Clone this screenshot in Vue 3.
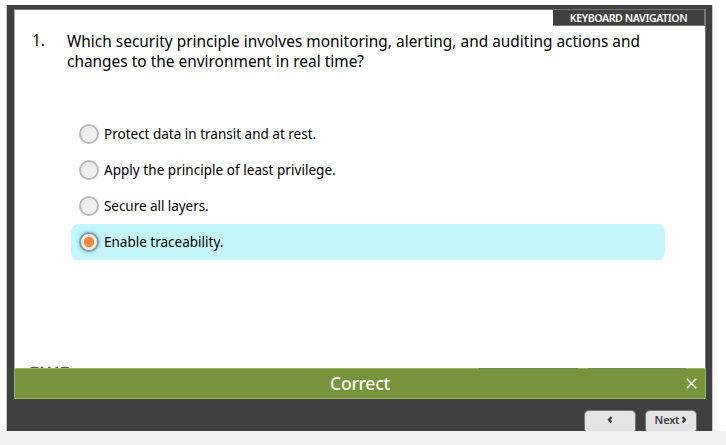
<script setup>
import { ref } from 'vue'

const selected = ref(3)
const options = [
  { text: 'Protect data in transit and at rest.', key: 'a' },
  { text: 'Apply the principle of least privilege.', key: 'b' },
  { text: 'Secure all layers.', key: 'c' },
  { text: 'Enable traceability.', key: 'd' },
]
</script>

<template>
  <div class="page">
    <main class="player">
      <section class="slide">
        <button class="keyboard">KEYBOARD NAVIGATION</button>
        <div class="question">
          <span class="number">1.</span>
          <p class="prompt">
            <span class="line first">Which security principle involves monitoring, alerting, and auditing actions and</span>
            <span class="line second">changes to the environment in real time?</span>
          </p>
        </div>
        <div class="options">
          <div
            v-for="(o, i) in options"
            :key="o.key"
            class="option"
            :class="[o.key, { selected: selected === i }]"
            @click="selected = i"
          >
            <span class="radio"></span>
            <span class="label">{{ o.text }}</span>
          </div>
        </div>
        <svg class="logo" width="42" height="2" viewBox="0 0 42 2">
          <g fill="none" stroke="#4f5865" stroke-width="1.3">
            <path d="M1.5 1.9Q5.5 .8 9.5 1.9" />
            <path d="M11.7 1.4h2.5M19 1.4h2.5M26.5 1.4h2.5" />
            <path d="M32 1.9Q36 .8 40 1.9" />
          </g>
        </svg>
      </section>
      <div class="feedback">
        <i class="edge one"></i><i class="edge two"></i>
        <span class="verdict">Correct</span>
        <svg class="close" width="11" height="11" viewBox="0 0 11 11">
          <path d="M.8.8l9.4 9.4M10.2.8L.8 10.2" stroke="#fff" stroke-width="1.5" fill="none" />
        </svg>
      </div>
      <nav class="controls">
        <button class="nav">
          <svg width="6" height="8" viewBox="0 0 6 8"><path d="M4.5 1L2 3.8l2.500 2.800" /></svg>
        </button>
        <button class="nav next">
          <span class="next-text">Next</span>
          <svg width="6" height="8" viewBox="0 0 6 8"><path d="M1.5 1L4 3.8 1.500 6.600" /></svg>
        </button>
      </nav>
    </main>
  </div>
</template>

<style>
body {
  margin: 0;
  background: #fff;
  overflow: hidden;
}
</style>

<style scoped>
.page {
  box-sizing: border-box;
  height: 445px;
  padding: 5px 13px 0 6px;
  background: linear-gradient(#fff 431px, #f0f0f0 431px);
  font-family: 'Noto Sans', sans-serif;
  color: #000;
}
button {
  font-family: inherit;
  border: 0;
  padding: 0;
}
.player {
  box-sizing: border-box;
  width: 707px;
  height: 426px;
  padding: 4px 6px 0 7px;
  background: #404040;
  border-left: 1px solid #c8c8c8;
  border-right: 1px solid #c8c8c8;
  display: flex;
  flex-direction: column;
}
.slide {
  box-sizing: border-box;
  position: relative;
  height: 359px;
  border: 1px solid #777;
  border-bottom: 0;
  border-left-color: #aaa;
  background: #fff;
}
.keyboard {
  position: absolute;
  top: 0;
  right: 0;
  width: 152px;
  height: 16px;
  border-right: 1px solid #777;
  border-bottom: 1px solid #777;
  background: #404040;
  color: #fff;
  font-size: 10.6px;
  font-weight: 600;
  letter-spacing: -0.4px;
  line-height: 16px;
  white-space: nowrap;
}
.question {
  display: flex;
  padding: 21px 0 0 17px;
  font-size: 15.4px;
  letter-spacing: 0.02px;
  line-height: 20px;
}
.number {
  width: 35px;
}
.prompt {
  margin: 1px 0 0;
}
.line {
  display: block;
  white-space: nowrap;
}
.options {
  padding: 44px 40px 0 56px;
}
.option {
  box-sizing: border-box;
  height: 36px;
  padding-left: 8px;
  border-radius: 8px;
  display: flex;
  align-items: center;
  gap: 5px;
  font-size: 13.5px;
  line-height: 18px;
  white-space: nowrap;
}
.label {
  margin-bottom: 1px;
}
.option.b {
  letter-spacing: 0.04px;
}
.option.c {
  letter-spacing: -0.05px;
}
.option.selected {
  background: #c5f6fb;
}
.radio {
  box-sizing: border-box;
  width: 20px;
  height: 20px;
  border: 2px solid #b9b9b9;
  border-radius: 50%;
  background: linear-gradient(135deg, #e8e8e8, #f4f4f4);
}
.selected .radio {
  border-color: #8c9ca3;
  background: radial-gradient(circle, #f18c3c 4.8px, #f3efed 5.6px);
  box-shadow: 0 0 4px #58cbed;
}
.logo {
  position: absolute;
  left: 14px;
  bottom: 0;
}
.feedback {
  box-sizing: border-box;
  position: relative;
  height: 31px;
  border: 1px solid #9daf6d;
  background: #77933c;
  display: flex;
  align-items: center;
  justify-content: center;
}
.edge {
  position: absolute;
  top: -1px;
  height: 1px;
  background: #6a9058;
}
.one {
  left: 464px;
  width: 99px;
}
.two {
  left: 573px;
  width: 98px;
}
.verdict {
  color: #fff;
  font-size: 17.6px;
  font-weight: 500;
  letter-spacing: -0.3px;
  line-height: 29px;
}
.close {
  position: absolute;
  right: 8px;
  top: 9px;
}
.controls {
  display: flex;
  justify-content: flex-end;
  gap: 9px;
  padding: 11px 9px 0 0;
}
.nav {
  box-sizing: border-box;
  width: 52px;
  height: 21px;
  border: 1px solid #777;
  border-bottom: 0;
  border-radius: 5px 5px 2px 2px;
  background: #e4e4e4;
  color: #404040;
  display: flex;
  align-items: center;
  justify-content: center;
  font-size: 11px;
  font-weight: 600;
  line-height: 18px;
}
.nav svg {
  fill: none;
  stroke: #404040;
  stroke-width: 2.3;
  margin-bottom: 2px;
}
.next {
  gap: 2px;
}
.next-text {
  letter-spacing: -0.2px;
  margin-bottom: 2px;
}
</style>
